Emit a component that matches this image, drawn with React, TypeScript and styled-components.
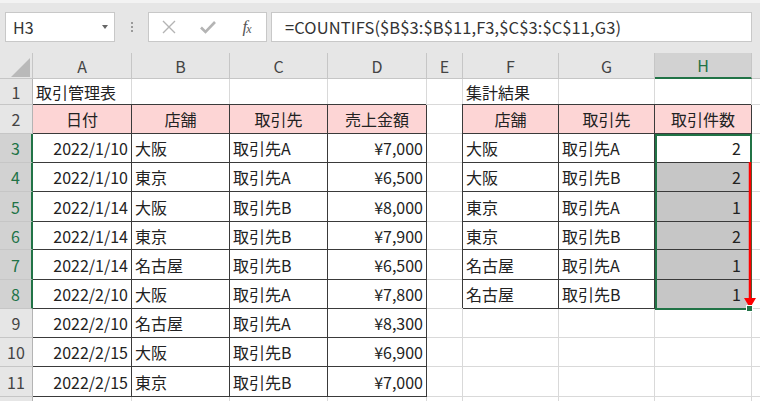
import React from 'react'
import styled, { createGlobalStyle, css } from 'styled-components'

const GREEN = '#217346'
const DARK = '#3a3a3a'
const GRID = '#d9d9d9'
const PINK = '#fdd5d5'

const GlobalStyle = createGlobalStyle`
  html, body {
    margin: 0;
    padding: 0;
    background: #fff;
  }
  body {
    font-family: "Noto Sans CJK JP", "Noto Sans", sans-serif;
  }
`

const Window = styled.div`
  width: 760px;
  height: 401px;
  overflow: hidden;
  background: #fff;
`

const FormulaBar = styled.div`
  height: 53px;
  box-sizing: border-box;
  background: #e6e6e6;
  border-top: 3px solid #f3f3f3;
  display: flex;
  align-items: flex-start;
  padding: 9px 8px 0 5px;
`

const NameBox = styled.div`
  width: 110px;
  height: 30px;
  box-sizing: border-box;
  background: #fff;
  border: 1px solid #c8c8c8;
  display: flex;
  align-items: center;
  justify-content: space-between;
  padding: 0 6px 0 7px;
  font-size: 16px;
  color: #333;

  &::after {
    content: '';
    border-left: 3.5px solid transparent;
    border-right: 3.5px solid transparent;
    border-top: 4px solid #666;
  }
`

const Grip = styled.div`
  width: 33px;
  height: 30px;
  display: flex;
  flex-direction: column;
  align-items: center;
  justify-content: center;
  gap: 2px;

  span {
    width: 2px;
    height: 2px;
    background: #9a9a9a;
  }
`

const FxBox = styled.div`
  width: 119px;
  height: 30px;
  box-sizing: border-box;
  background: #fff;
  border: 1px solid #c8c8c8;
  display: flex;
  margin-right: 4px;
`

const FxButton = styled.div<{ $dim?: boolean }>`
  flex: 1;
  display: flex;
  align-items: center;
  justify-content: center;
  color: ${p => (p.$dim ? '#b4b4b4' : '#555')};
`

const FxLabel = styled.span`
  font-family: "Liberation Serif", serif;
  font-style: italic;
  font-size: 17px;
  letter-spacing: -1px;

  sub {
    font-size: 12px;
    vertical-align: -1px;
  }
`

const FormulaInput = styled.div`
  flex: 1;
  height: 30px;
  box-sizing: border-box;
  background: #fff;
  border: 1px solid #c8c8c8;
  display: flex;
  align-items: center;
  padding-left: 13px;
  font-size: 16.5px;
  letter-spacing: 0.1px;
  color: #333;
  white-space: nowrap;
`

const Sheet = styled.div`
  display: grid;
  grid-template-columns: 33px 99px 98px 98px 99px 36px 96px 96px 97px 98px;
  grid-template-rows: 26px 26px 29px 29px 29px 30px 28px 30px 29px 29px 29px 30px 29px;
  font-size: 16px;
  line-height: 1;
`

interface Place {
  $r: number,
  $c: number,
}

const placed = css<Place>`
  grid-row: ${p => p.$r};
  grid-column: ${p => p.$c};
`

const Corner = styled.div`
  grid-row: 1;
  grid-column: 1;
  background: #e6e6e6;
  border-right: 1px solid #c6c6c6;
  border-bottom: 1px solid #c6c6c6;
  box-sizing: border-box;
`

const ColHead = styled.div<Place & { $active?: boolean }>`
  ${placed}
  box-sizing: border-box;
  display: flex;
  align-items: center;
  justify-content: center;
  background: ${p => (p.$active ? '#d2d2d2' : '#e6e6e6')};
  color: ${p => (p.$active ? GREEN : '#444')};
  border-right: 1px solid #c6c6c6;
  border-bottom: ${p => (p.$active ? `2px solid ${GREEN}` : '1px solid #c6c6c6')};
`

const RowHead = styled.div<Place & { $active?: boolean }>`
  ${placed}
  box-sizing: border-box;
  display: flex;
  align-items: center;
  justify-content: center;
  background: ${p => (p.$active ? '#d2d2d2' : '#e6e6e6')};
  color: ${p => (p.$active ? GREEN : '#444')};
  border-bottom: 1px solid #c6c6c6;
  border-right: ${p => (p.$active ? `2px solid ${GREEN}` : '1px solid #b4b4b4')};
`

type Kind = 'plain' | 'head' | 'body'
type Align = 'left' | 'center' | 'right'

interface CellProps extends Place {
  $kind: Kind,
  $align: Align,
  $fill?: boolean,
  $first?: boolean,
  $pad?: number,
}

const Cell = styled.div<CellProps>`
  ${placed}
  box-sizing: border-box;
  display: flex;
  align-items: center;
  justify-content: ${p => (p.$align === 'left' ? 'flex-start' : p.$align === 'right' ? 'flex-end' : 'center')};
  padding: 0 ${p => p.$pad ?? 3}px 0 3px;
  white-space: nowrap;
  overflow: hidden;
  color: #222;
  background: ${p => (p.$kind === 'head' ? PINK : p.$fill ? '#c6c6c6' : '#fff')};
  border-right: 1px solid ${p => (p.$kind === 'plain' ? GRID : DARK)};
  border-bottom: 1px solid ${p => (p.$kind === 'plain' ? GRID : DARK)};
  ${p => p.$kind !== 'plain' && css`
    box-shadow: ${p.$first ? '0 -1px 0' : '-1px -1px 0'} ${DARK};
  `}
`

const Selection = styled.div`
  grid-column: 9;
  grid-row: 4 / 10;
  margin-bottom: -1px;
  border: 2px solid ${GREEN};
  position: relative;
  pointer-events: none;
`

const FillHandle = styled.div`
  position: absolute;
  right: -3px;
  bottom: -4px;
  width: 5px;
  height: 5px;
  background: ${GREEN};
  border: 1px solid #fff;
`

const Arrow = styled.svg`
  position: absolute;
  left: 86px;
  top: 26px;
`

const CornerMark = styled.svg`
  display: block;
`

const sales = [
  ['2022/1/10', '大阪', '取引先A', '¥7,000'],
  ['2022/1/10', '東京', '取引先A', '¥6,500'],
  ['2022/1/14', '大阪', '取引先B', '¥8,000'],
  ['2022/1/14', '東京', '取引先B', '¥7,900'],
  ['2022/1/14', '名古屋', '取引先B', '¥6,500'],
  ['2022/2/10', '大阪', '取引先A', '¥7,800'],
  ['2022/2/10', '名古屋', '取引先A', '¥8,300'],
  ['2022/2/15', '大阪', '取引先B', '¥6,900'],
  ['2022/2/15', '東京', '取引先B', '¥7,000'],
]

const summary = [
  ['大阪', '取引先A', '2'],
  ['大阪', '取引先B', '2'],
  ['東京', '取引先A', '1'],
  ['東京', '取引先B', '2'],
  ['名古屋', '取引先A', '1'],
  ['名古屋', '取引先B', '1'],
]

interface Spec {
  text?: string,
  kind?: Kind,
  align?: Align,
  fill?: boolean,
  pad?: number,
}

const COLS = ['A', 'B', 'C', 'D', 'E', 'F', 'G', 'H', 'I']

function buildRow(r: number): Spec[] {
  const cells: Spec[] = COLS.map(() => ({}))
  if (r === 1) {
    cells[0] = { text: '取引管理表' }
    cells[5] = { text: '集計結果' }
  }
  if (r === 2) {
    ;['日付', '店舗', '取引先', '売上金額'].forEach((t, i) => {
      cells[i] = { text: t, kind: 'head', align: 'center' }
    })
    ;['店舗', '取引先', '取引件数'].forEach((t, i) => {
      cells[5 + i] = { text: t, kind: 'head', align: 'center' }
    })
  }
  if (r >= 3 && r <= 11) {
    const s = sales[r - 3]
    cells[0] = { text: s[0], kind: 'body', align: 'right' }
    cells[1] = { text: s[1], kind: 'body' }
    cells[2] = { text: s[2], kind: 'body' }
    cells[3] = { text: s[3], kind: 'body', align: 'right' }
  }
  if (r >= 3 && r <= 8) {
    const s = summary[r - 3]
    cells[5] = { text: s[0], kind: 'body' }
    cells[6] = { text: s[1], kind: 'body' }
    cells[7] = { text: s[2], kind: 'body', align: 'right', fill: r > 3, pad: 10 }
  }
  return cells
}

const isActiveRow = (r: number) => r >= 3 && r <= 8

export default function App() {
  const rows = Array.from({ length: 12 }, (_, i) => i + 1)

  return (
    <Window>
      <GlobalStyle />
      <FormulaBar>
        <NameBox>H3</NameBox>
        <Grip><span /><span /><span /></Grip>
        <FxBox>
          <FxButton $dim>
            <svg width="14" height="14" viewBox="0 0 14 14">
              <path d="M1 1L13 13M13 1L1 13" stroke="currentColor" strokeWidth="1.4" />
            </svg>
          </FxButton>
          <FxButton $dim>
            <svg width="16" height="14" viewBox="0 0 16 14">
              <path d="M1 7.5L5.5 12L15 2" stroke="currentColor" strokeWidth="2.6" fill="none" />
            </svg>
          </FxButton>
          <FxButton>
            <FxLabel>f<sub>x</sub></FxLabel>
          </FxButton>
        </FxBox>
        <FormulaInput>=COUNTIFS($B$3:$B$11,F3,$C$3:$C$11,G3)</FormulaInput>
      </FormulaBar>

      <Sheet>
        <Corner>
          <CornerMark width="32" height="25" viewBox="0 0 32 25">
            <polygon points="30,5 30,24 11,24" fill="#b9b9b9" />
          </CornerMark>
        </Corner>
        {COLS.map((c, i) => (
          <ColHead key={c} $r={1} $c={i + 2} $active={c === 'H'}>{c}</ColHead>
        ))}

        {rows.map(r => (
          <React.Fragment key={r}>
            <RowHead $r={r + 1} $c={1} $active={isActiveRow(r)}>{r}</RowHead>
            {buildRow(r).map((s, i) => (
              <Cell
                key={i}
                $r={r + 1}
                $c={i + 2}
                $kind={s.kind ?? 'plain'}
                $align={s.align ?? 'left'}
                $fill={s.fill}
                $first={i === 0}
                $pad={s.pad}
              >
                {s.text}
              </Cell>
            ))}
          </React.Fragment>
        ))}

        <Selection>
          <Arrow width="14" height="150" viewBox="0 0 14 150">
            <line x1="7" y1="0" x2="7" y2="140" stroke="#ff0000" strokeWidth="2.5" />
            <polygon points="1,136 13,136 7,146" fill="#ff0000" />
          </Arrow>
          <FillHandle />
        </Selection>
      </Sheet>
    </Window>
  )
}
